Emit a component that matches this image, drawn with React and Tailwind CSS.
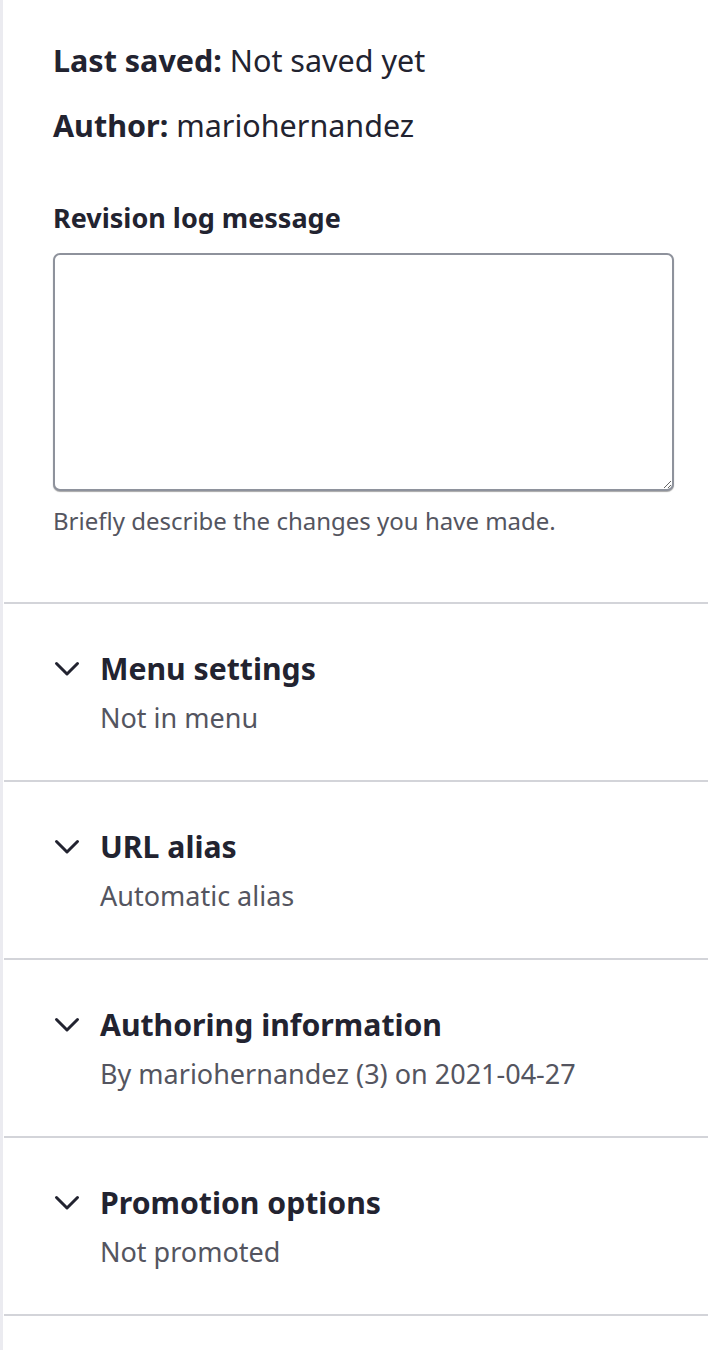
import React from "react";

const sections = [
  { title: "Menu settings", summary: "Not in menu" },
  { title: "URL alias", summary: "Automatic alias" },
  { title: "Authoring information", summary: "By mariohernandez (3) on 2021-04-27" },
  { title: "Promotion options", summary: "Not promoted" },
];

function Chevron() {
  return (
    <svg width="28" height="18" viewBox="0 0 28 18" className="shrink-0 mr-[19px]" aria-hidden="true">
      <path d="M3.5 3.5 L14 14 L24.5 3.5" fill="none" stroke="#222330" strokeWidth="3" strokeLinecap="round" strokeLinejoin="round" />
    </svg>
  );
}

export default function App() {
  return (
    <div className="min-h-[1350px] bg-white border-l-[3px] border-[#ebebf0] font-['Noto_Sans',sans-serif] text-[#222330]">
      <div className="pl-px">
        <div className="pl-[49px] pr-[34px] pt-[40px] pb-[65px]">
          <p className="text-[30.5px] leading-[40px]">
            <span className="font-bold">Last saved:</span> Not saved yet
          </p>
          <p className="mt-[25px] text-[30.5px] leading-[40px]">
            <span className="font-bold">Author:</span> mariohernandez
          </p>
          <label className="mt-[55px] block text-[27px] leading-[36px] font-bold">Revision log message</label>
          <textarea
            className="mt-[17px] block w-full h-[238px] rounded-[7px] border-2 border-[#8e929c] bg-white shadow-[0_1px_1px_rgba(0,0,0,0.35)] outline-none"
            aria-label="Revision log message"
          />
          <p className="mt-[14px] text-[24px] leading-[32px] text-[#545560]">
            Briefly describe the changes you have made.
          </p>
        </div>
        {sections.map((s) => (
          <div key={s.title} className="border-t-2 border-[#d3d4d9] pl-[49px] pr-[34px] pt-[45px] pb-[44px]">
            <div className="flex items-center">
              <Chevron />
              <span className="text-[30.2px] leading-[40px] font-bold">{s.title}</span>
            </div>
            <p className="mt-[11px] pl-[47px] text-[27px] leading-[36px] text-[#545560]">{s.summary}</p>
          </div>
        ))}
        <div className="border-t-2 border-[#d3d4d9]" />
      </div>
    </div>
  );
}
